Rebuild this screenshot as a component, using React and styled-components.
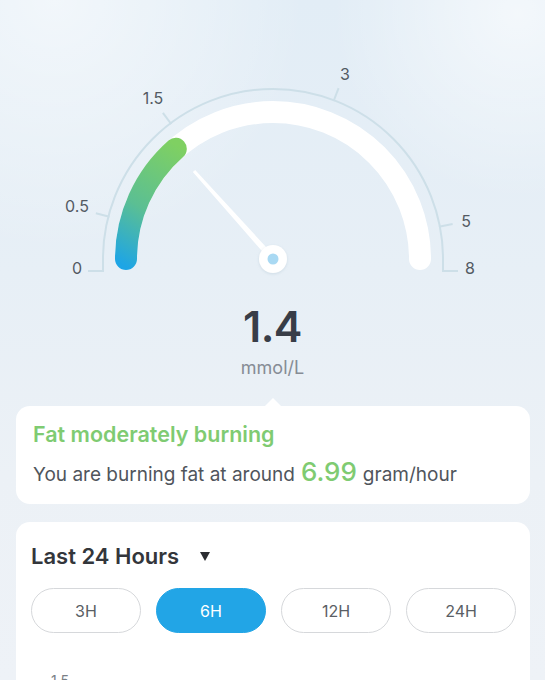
import React from "react";
import styled, { createGlobalStyle } from "styled-components";

const GlobalStyle = createGlobalStyle`
  html, body {
    margin: 0;
    padding: 0;
  }
  body {
    font-family: Inter, "Noto Sans", "Liberation Sans", sans-serif;
    background: #e9eff5;
  }
`;

const Page = styled.div`
  width: 545px;
  height: 680px;
  overflow: hidden;
  background:
    radial-gradient(circle at 10% 0%, rgba(255, 255, 255, 0.55), rgba(255, 255, 255, 0) 30%),
    radial-gradient(circle at 95% 2%, rgba(255, 255, 255, 0.6), rgba(255, 255, 255, 0) 22%),
    linear-gradient(180deg, #e2edf6 0%, #e7eff6 40%, #ecf1f6 70%, #eef2f7 100%);
`;

const GaugeWrap = styled.div`
  height: 296px;
  display: flex;
  justify-content: center;
`;

const Reading = styled.div`
  display: flex;
  flex-direction: column;
  align-items: center;
`;

const Value = styled.div`
  font-size: 43px;
  line-height: 48px;
  font-weight: 600;
  color: #383d47;
  letter-spacing: -0.5px;
  margin-top: 6px;
`;

const Unit = styled.div`
  font-size: 18px;
  line-height: 24px;
  color: #868c95;
  margin-top: 6px;
`;

const Card = styled.section`
  position: relative;
  background: #fff;
  border-radius: 14px;
  margin: ${(p) => p.$mt}px 15px 0 16px;
  padding: ${(p) => p.$pad};
`;

const Notch = styled.div`
  position: absolute;
  top: -8px;
  left: 249px;
  width: 0;
  height: 0;
  border-left: 8px solid transparent;
  border-right: 8px solid transparent;
  border-bottom: 8px solid #fff;
`;

const Status = styled.div`
  font-size: 21.5px;
  line-height: 26px;
  font-weight: 600;
  color: #7fcb72;
`;

const Rate = styled.div`
  margin-top: 10px;
  height: 30px;
  font-size: 19px;
  line-height: 30px;
  color: #50555c;
  display: flex;
  align-items: baseline;
  gap: 6px;
`;

const RateNum = styled.span`
  font-size: 26px;
  font-weight: 500;
  color: #7fcb72;
`;

const RangeHead = styled.div`
  display: flex;
  align-items: center;
  gap: 21px;
  font-size: 22px;
  line-height: 28px;
  font-weight: 600;
  color: #33363b;
`;

const Caret = styled.span`
  width: 0;
  height: 0;
  border-left: 5.5px solid transparent;
  border-right: 5.5px solid transparent;
  border-top: 9px solid #2b2d31;
`;

const Pills = styled.div`
  display: grid;
  grid-template-columns: repeat(4, 1fr);
  gap: 15px;
  margin-top: 18px;
`;

const Pill = styled.button`
  height: 45px;
  border-radius: 23px;
  font-family: inherit;
  font-size: 16px;
  color: ${(p) => (p.$active ? "#fff" : "#5a5e64")};
  background: ${(p) => (p.$active ? "#22a5e6" : "#fff")};
  border: 1px solid ${(p) => (p.$active ? "#22a5e6" : "#d6d8db")};
  padding: 0;
`;

const AxisLabel = styled.div`
  margin-top: 40px;
  padding-left: 20px;
  font-size: 14px;
  line-height: 16px;
  color: #7a7f86;
`;

const CX = 273;
const CY = 259;

function polar(r, degFromLeft) {
  const a = (Math.PI * degFromLeft) / 180;
  return [CX - r * Math.cos(a), CY - r * Math.sin(a)];
}

function Gauge() {
  const ticks = [14.5, 53, 111, 169];
  const labels = [
    { t: "0", x: 77, y: 268 },
    { t: "0.5", x: 77, y: 206 },
    { t: "1.5", x: 153, y: 98 },
    { t: "3", x: 345, y: 74 },
    { t: "5", x: 466, y: 221 },
    { t: "8", x: 470, y: 268 },
  ];
  const [gx, gy] = polar(147, 48.6);
  const tip = [194, 171];
  const dx = tip[0] - CX;
  const dy = tip[1] - CY;
  const len = Math.hypot(dx, dy);
  const px = -dy / len;
  const py = dx / len;
  const needle = [
    [tip[0] + px * 1.6, tip[1] + py * 1.6],
    [tip[0] - px * 1.6, tip[1] - py * 1.6],
    [CX - px * 3, CY - py * 3],
    [CX + px * 3, CY + py * 3],
  ]
    .map((p) => p.join(","))
    .join(" ");

  return (
    <svg width="545" height="296" viewBox="0 0 545 296">
      <defs>
        <linearGradient id="burn" gradientUnits="userSpaceOnUse" x1="118" y1="262" x2="185" y2="150">
          <stop offset="0" stopColor="#1ea5e5" />
          <stop offset="0.45" stopColor="#5bbf93" />
          <stop offset="1" stopColor="#7fd062" />
        </linearGradient>
        <filter id="soft" x="-50%" y="-50%" width="200%" height="200%">
          <feDropShadow dx="0" dy="1" stdDeviation="1.5" floodColor="#9fb8c8" floodOpacity="0.35" />
        </filter>
      </defs>
      <path
        d={`M 88 271 H 103 V ${CY} A 170 170 0 0 1 443 ${CY} V 271 H 458`}
        fill="none"
        stroke="#cddfe8"
        strokeWidth="2"
      />
      {ticks.map((d) => {
        const [x1, y1] = polar(169, d);
        const [x2, y2] = polar(183, d);
        return <line key={d} x1={x1} y1={y1} x2={x2} y2={y2} stroke="#cddfe8" strokeWidth="2" />;
      })}
      {labels.map((l) => (
        <text
          key={l.t}
          x={l.x}
          y={l.y + 6}
          textAnchor="middle"
          fontSize="16"
          fill="#535a63"
          fontFamily="Inter, 'Noto Sans', sans-serif"
        >
          {l.t}
        </text>
      ))}
      <path
        d={`M ${CX - 147} ${CY} A 147 147 0 0 1 ${CX + 147} ${CY}`}
        fill="none"
        stroke="#ffffff"
        strokeWidth="22"
        strokeLinecap="round"
      />
      <path
        d={`M ${CX - 147} ${CY} A 147 147 0 0 1 ${gx} ${gy}`}
        fill="none"
        stroke="url(#burn)"
        strokeWidth="22"
        strokeLinecap="round"
      />
      <polygon points={needle} fill="#ffffff" />
      <circle cx={CX} cy={CY} r="14" fill="#ffffff" filter="url(#soft)" />
      <circle cx={CX} cy={CY} r="5.5" fill="#a9d9f3" />
    </svg>
  );
}

export default function App() {
  const ranges = ["3H", "6H", "12H", "24H"];
  return (
    <Page>
      <GlobalStyle />
      <GaugeWrap>
        <Gauge />
      </GaugeWrap>
      <Reading>
        <Value>1.4</Value>
        <Unit>mmol/L</Unit>
      </Reading>
      <Card $mt={26} $pad="15px 17px 17px 17px">
        <Notch />
        <Status>Fat moderately burning</Status>
        <Rate>
          <span>You are burning fat at around</span>
          <RateNum>6.99</RateNum>
          <span>gram/hour</span>
        </Rate>
      </Card>
      <Card $mt={18} $pad="20px 14px 20px 15px">
        <RangeHead>
          Last 24 Hours
          <Caret />
        </RangeHead>
        <Pills>
          {ranges.map((r) => (
            <Pill key={r} $active={r === "6H"}>
              {r}
            </Pill>
          ))}
        </Pills>
        <AxisLabel>1.5</AxisLabel>
      </Card>
    </Page>
  );
}
